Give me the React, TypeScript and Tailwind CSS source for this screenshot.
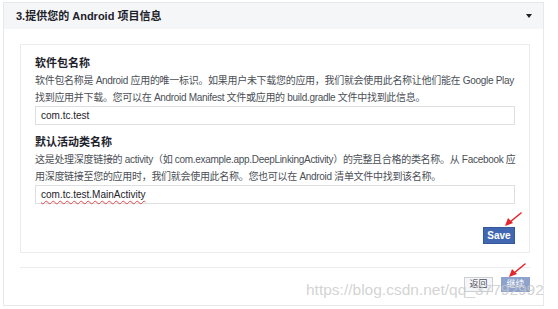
const FONT = "font-['Liberation_Sans','Noto_Sans_CJK_SC',sans-serif]";

const RedArrow = ({ className }: { className: string }) => (
  <svg className={className} width="18" height="16" viewBox="0 0 18 16">
    <line x1="17" y1="1" x2="6" y2="10" stroke="#e3262b" strokeWidth="1.6" strokeLinecap="round" />
    <polygon points="1,14 4,6 9,11" fill="#e3262b" />
  </svg>
);

const Field = ({
  label,
  lines,
  value,
  wavy,
}: {
  label: string;
  lines: string[];
  value: string;
  wavy?: boolean;
}) => (
  <div className="flex flex-col">
    <div className="text-[11px] leading-[17px] font-bold text-[#1d2129]">{label}</div>
    {lines.map((line, i) => (
      <div key={i} className="text-[10px] leading-[17px] tracking-[-0.3px] text-[#4b4f56] whitespace-nowrap">
        {line}
      </div>
    ))}
    <div className="h-[19px] w-full border border-[#dddfe2] flex items-center px-[5px] text-[10px] text-[#1d2129]">
      <span className={wavy ? "underline decoration-wavy decoration-[#e04848] decoration-1 underline-offset-2" : ""}>
        {value}
      </span>
    </div>
  </div>
);

const App = () => {
  return (
    <div className={`relative w-[558px] h-[309px] bg-white overflow-hidden ${FONT}`}>
      <div className="ml-[3px] mt-[2px] w-[541px] h-[304px] border border-[#e7e8eb] flex flex-col">
        <div className="h-[26px] bg-[#f5f6f7] flex items-center justify-between pl-[12px] pr-[11px]">
          <span className="text-[11px] font-bold text-[#1d2129]">3.提供您的 Android 项目信息</span>
          <span className="w-0 h-0 border-l-[3px] border-r-[3px] border-t-[4px] border-l-transparent border-r-transparent border-t-[#1d2129]" />
        </div>
        <div className="pl-[16px] pt-[15px]">
          <div className="w-[510px] border border-[#ebecef] px-[14px] pt-[10px] pb-[8px] flex flex-col">
            <Field
              label="软件包名称"
              lines={[
                "软件包名称是 Android 应用的唯一标识。如果用户未下载您的应用，我们就会使用此名称让他们能在 Google Play",
                "找到应用并下载。您可以在 Android Manifest 文件或应用的 build.gradle 文件中找到此信息。",
              ]}
              value="com.tc.test"
            />
            <div className="mt-[9px]">
              <Field
                label="默认活动类名称"
                lines={[
                  "这是处理深度链接的 activity（如 com.example.app.DeepLinkingActivity）的完整且合格的类名称。从 Facebook 应",
                  "用深度链接至您的应用时，我们就会使用此名称。您也可以在 Android 清单文件中找到该名称。",
                ]}
                value="com.tc.test.MainActivity"
                wavy
              />
            </div>
            <div className="mt-[23px] flex justify-end">
              <button className="h-[17px] w-[32px] bg-[#4267b2] border border-[#365899] text-white text-[10px] font-bold flex items-center justify-center">
                Save
              </button>
            </div>
          </div>
          <div className="mt-[14px] w-[510px] border-t border-[#ebecef]" />
          <div className="w-[510px] mt-[9px] flex justify-end gap-[8px]">
            <button className="h-[15px] w-[29px] bg-[#f5f6f7] border border-[#ccd0d5] text-[#4b4f56] text-[9px] flex items-center justify-center">
              返回
            </button>
            <button className="h-[15px] w-[29px] bg-[#8da2cc] text-white text-[9px] flex items-center justify-center">
              继续
            </button>
          </div>
        </div>
      </div>
      <RedArrow className="absolute left-[504px] top-[212px]" />
      <RedArrow className="absolute left-[508px] top-[263px]" />
      <div className="absolute left-[306px] top-[281px] text-[15.5px] leading-[18px] text-[#c8c8c8]/80 whitespace-nowrap">
        https://blog.csdn.net/qq_37792992
      </div>
    </div>
  );
};

export default App;
